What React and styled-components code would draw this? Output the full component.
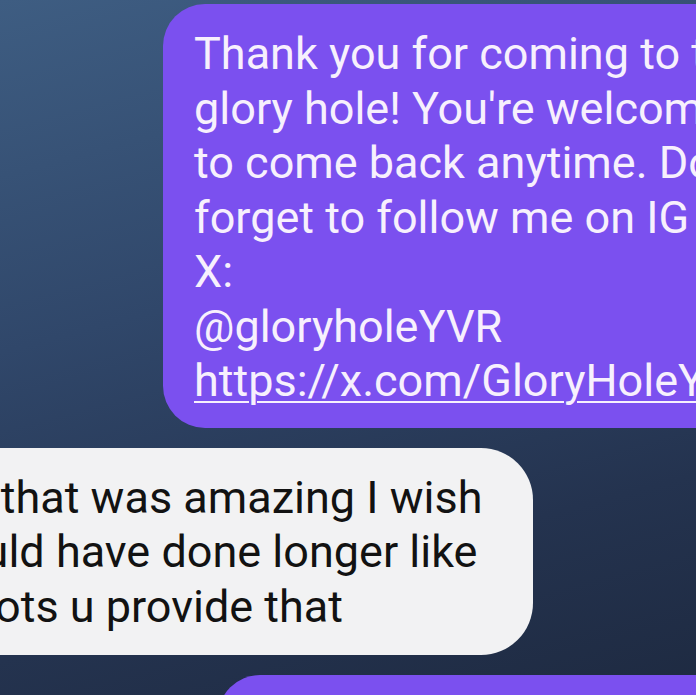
import React from 'react'
import styled, { createGlobalStyle } from 'styled-components'

const GlobalStyle = createGlobalStyle`
  html, body {
    margin: 0;
    padding: 0;
    width: 696px;
    height: 695px;
    overflow: hidden;
  }
  body {
    font-family: Roboto, "Noto Sans", "Liberation Sans", sans-serif;
  }
`;

const Thread = styled.div`
  width: 696px;
  height: 695px;
  overflow: hidden;
  display: flex;
  flex-direction: column;
  gap: 20px;
  padding-top: 4px;
  box-sizing: border-box;
  background: linear-gradient(165deg, #3e5d82 0%, #30476a 40%, #24334f 75%, #1e2a41 100%);
`;

const Bubble = styled.div`
  flex-shrink: 0;
  box-sizing: border-box;
  font-size: 45px;
  line-height: 54.5px;
  white-space: nowrap;
  overflow: hidden;
  ${({ $mine }) => $mine ? `
    background: #7b50ef;
    color: #f7f0fd;
    margin-left: 163px;
    width: 620px;
    border-radius: 42px;
    padding: 23px 0 19px 31px;
  ` : `
    background: #f2f2f3;
    color: #121212;
    margin-left: -32px;
    width: 565px;
    border-radius: 0 52px 52px 0;
    padding: 23px 0 21px 32px;
  `}
`;

const Line = styled.div`
  margin-left: ${({ $shift }) => $shift || 0}px;
`;

const Link = styled.span`
  text-decoration: underline;
  text-decoration-thickness: 2px;
  text-underline-offset: 5px;
`;

const NextBubble = styled(Bubble)`
  margin-left: 218px;
  height: 90px;
`;

const sent = [
  'Thank you for coming to the',
  "glory hole! You're welcome",
  'to come back anytime. Don\u2019t',
  'forget to follow me on IG and',
  'X:',
  '@gloryholeYVR',
];

const received = [
  { text: 'And that was amazing I wish', shift: -90 },
  { text: 'I could have done longer like', shift: -89 },
  { text: 'the spots u provide that', shift: -128 },
];

export default function App() {
  return (
    <>
      <GlobalStyle />
      <Thread>
        <Bubble $mine>
          {sent.map((line) => (
            <Line key={line}>{line}</Line>
          ))}
          <Line>
            <Link>https://x.com/GloryHoleYVR</Link>
          </Line>
        </Bubble>
        <Bubble>
          {received.map((line) => (
            <Line key={line.text} $shift={line.shift}>{line.text}</Line>
          ))}
        </Bubble>
        <NextBubble $mine />
      </Thread>
    </>
  );
}
